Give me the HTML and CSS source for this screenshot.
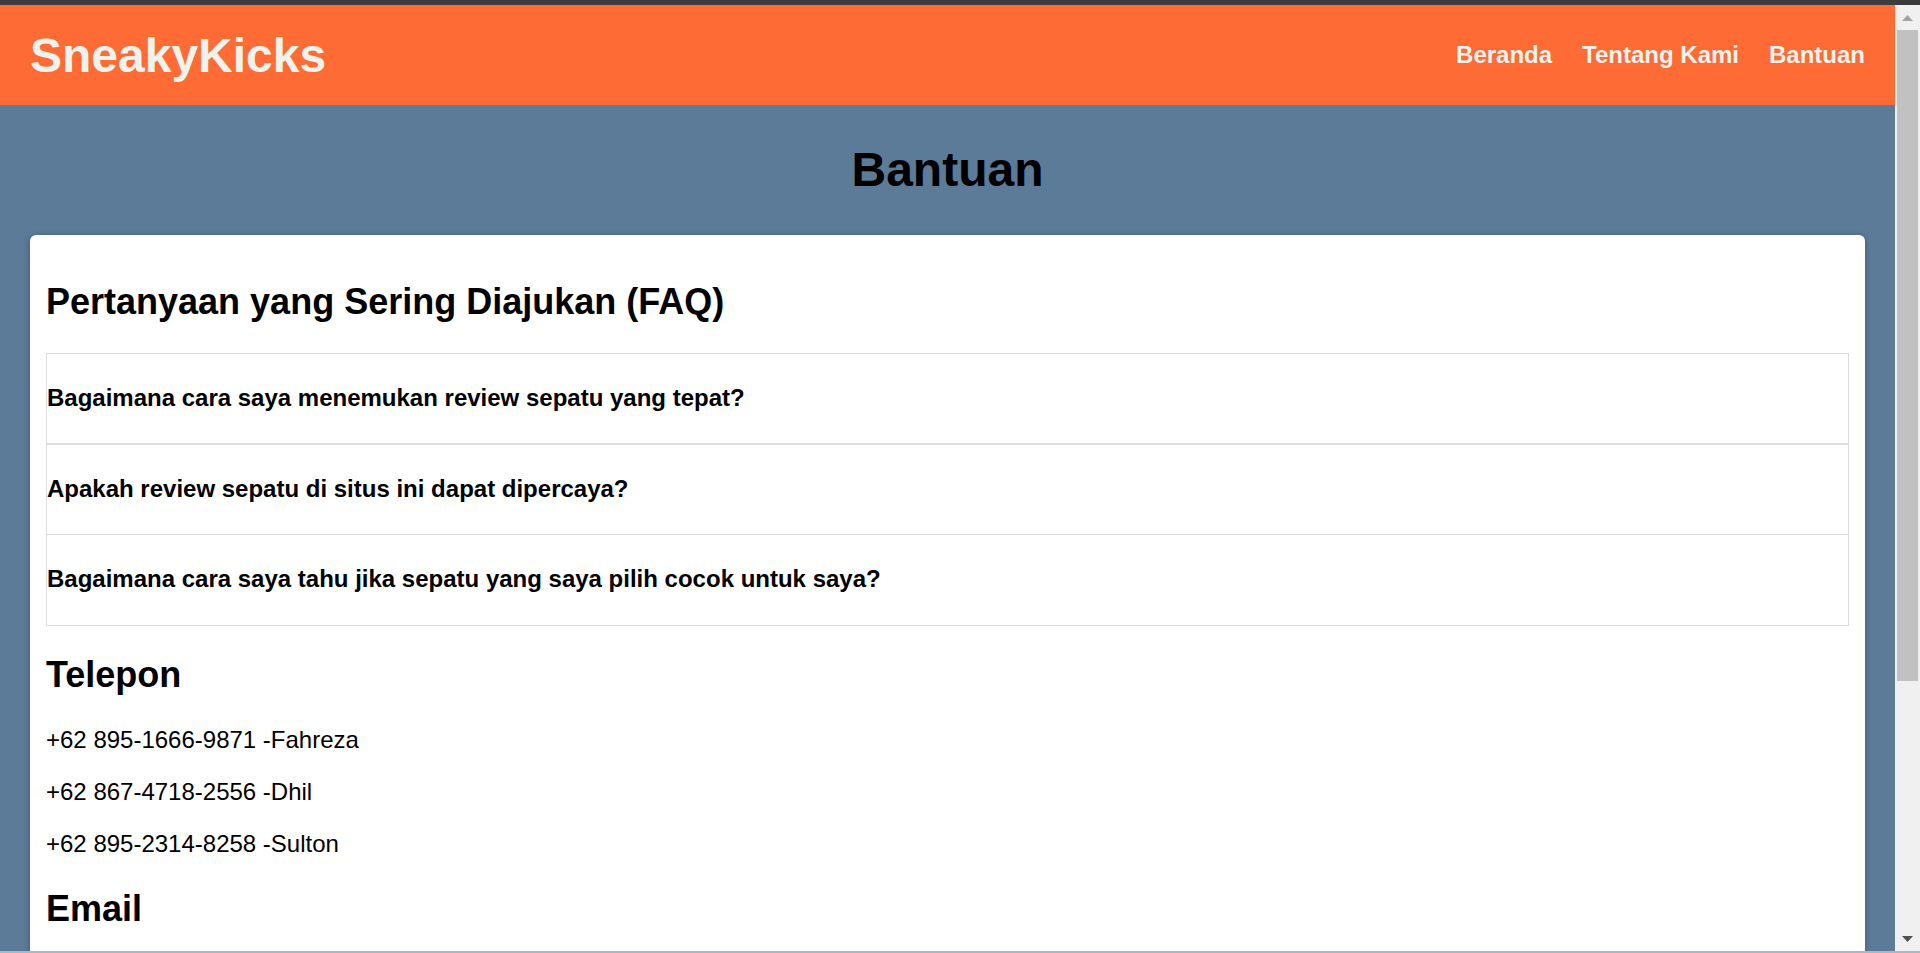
FILE: index.html
```html
<!DOCTYPE html>
<html lang="id">
<head>
<meta charset="utf-8">
<title>Bantuan - SneakyKicks</title>
<link rel="stylesheet" href="styles.css">
</head>
<body>
<div class="frame-top"></div>
<div class="window">
  <div class="viewport">
    <header class="site-header">
      <div class="logo">SneakyKicks</div>
      <nav class="nav">
        <a href="#" class="nav-link">Beranda</a>
        <a href="#" class="nav-link">Tentang Kami</a>
        <a href="#" class="nav-link">Bantuan</a>
      </nav>
    </header>
    <main class="main">
      <h1 class="page-title">Bantuan</h1>
      <section class="card">
        <h2 class="section-title">Pertanyaan yang Sering Diajukan (FAQ)</h2>
        <div class="faq-list">
          <div class="faq-item faq-item-first">Bagaimana cara saya menemukan review sepatu yang tepat?</div>
          <div class="faq-item">Apakah review sepatu di situs ini dapat dipercaya?</div>
          <div class="faq-item faq-item-last">Bagaimana cara saya tahu jika sepatu yang saya pilih cocok untuk saya?</div>
        </div>
        <h2 class="section-title section-title-after-faq">Telepon</h2>
        <p class="contact">+62 895-1666-9871 -Fahreza</p>
        <p class="contact">+62 867-4718-2556 -Dhil</p>
        <p class="contact">+62 895-2314-8258 -Sulton</p>
        <h2 class="section-title">Email</h2>
      </section>
    </main>
  </div>
  <div class="scrollbar">
    <div class="sb-btn">
      <svg width="11" height="6" viewBox="0 0 11 6"><polygon points="0,6 5.5,0 11,6" fill="#a3a3a3"/></svg>
    </div>
    <div class="sb-thumb"></div>
    <div class="sb-track"></div>
    <div class="sb-btn">
      <svg width="11" height="6" viewBox="0 0 11 6"><polygon points="0,0 11,0 5.5,6" fill="#505050"/></svg>
    </div>
  </div>
</div>
<div class="frame-bottom"></div>
</body>
</html>
```

FILE: styles.css
```css
html, body {
  margin: 0;
  padding: 0;
  height: 953px;
  overflow: hidden;
}

body {
  font-family: "Liberation Sans", Arial, sans-serif;
  display: flex;
  flex-direction: column;
  background: #5b7b99;
}

.frame-top {
  height: 5px;
  background: #3c3c3c;
  flex: none;
}

.frame-bottom {
  height: 2px;
  background: #aeb6be;
  flex: none;
}

.window {
  flex: 1;
  display: flex;
  min-height: 0;
}

.viewport {
  flex: 1;
  overflow: hidden;
  background: #5b7b99;
}

.site-header {
  height: 100px;
  background: #ff6b35;
  display: flex;
  align-items: center;
  justify-content: space-between;
  padding: 0 30px;
}

.logo {
  font-size: 48px;
  font-weight: bold;
  color: #eff3ec;
}

.nav {
  display: flex;
  gap: 30px;
}

.nav-link {
  font-size: 24px;
  font-weight: bold;
  color: #f3f3ee;
  text-decoration: none;
}

.main {
  padding: 0 30px;
}

.page-title {
  margin: 37px 0 38px;
  font-size: 48px;
  line-height: 55px;
  font-weight: bold;
  text-align: center;
  color: #000;
}

.card {
  background: #fff;
  border-radius: 6px;
  box-shadow: 0 1px 6px rgba(0, 0, 0, 0.28);
  padding: 16px;
  display: flow-root;
}

.section-title {
  font-size: 36px;
  font-weight: bold;
  margin: 30px 0;
  color: #000;
}

.section-title-after-faq {
  margin-top: 28px;
}

.faq-list {
  border: 1px solid #dcdcdc;
}

.faq-item {
  font-size: 24px;
  font-weight: bold;
  line-height: 28px;
  padding: 30px 0 31px;
  color: #000;
  border-bottom: 1px solid #dcdcdc;
}

.faq-item-first {
  border-bottom-width: 2px;
}

.faq-item-last {
  border-bottom: 0;
  padding-bottom: 32px;
}

.contact {
  font-size: 24px;
  margin: 24px 0;
  color: #000;
}

.scrollbar {
  width: 25px;
  flex: none;
  background: #f0f0f0;
  display: flex;
  flex-direction: column;
}

.sb-btn {
  height: 25px;
  flex: none;
  display: flex;
  align-items: center;
  justify-content: center;
}

.sb-thumb {
  height: 651px;
  flex: none;
  margin: 0 2px;
  background: #c1c1c1;
}

.sb-track {
  flex: 1;
}
```
